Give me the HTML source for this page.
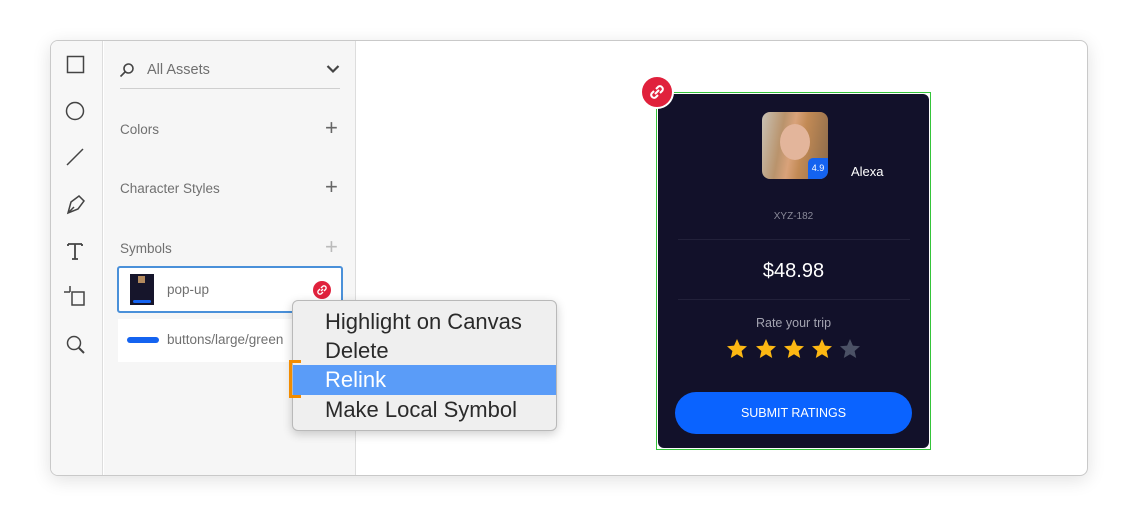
<!DOCTYPE html>
<html><head><style>
*{margin:0;padding:0;box-sizing:border-box}
body{width:1138px;height:517px;background:#fff;font-family:"Liberation Sans",sans-serif;position:relative;overflow:hidden}
.a{position:absolute}
.win{left:50px;top:40px;width:1038px;height:436px;border:1px solid #c9c9c9;border-radius:8px;overflow:hidden;box-shadow:0 4px 18px rgba(0,0,0,.12);background:#fff}
.tb{left:0;top:0;width:52px;height:100%;background:#f7f7f7;border-right:1px solid #ddd}
.pn{left:53px;top:0;width:252px;height:100%;background:#f6f6f6;border-right:1px solid #ddd}
.lbl{font-size:13.5px;color:#707070}
.plus{font-size:22px;color:#666;font-weight:300}
.menu{left:292px;top:300px;width:265px;height:131px;background:#efefef;border:1px solid #b9b9b9;border-radius:6px;box-shadow:0 3px 10px rgba(0,0,0,.2)}
.mi{position:absolute;left:32px;font-size:22px;color:#2a2a2a;white-space:nowrap}
.star{position:absolute;top:338px;width:22px;height:22px}
</style></head><body>
<div class="a win">
 <div class="a tb">
  <svg class="a" style="left:0;top:0" width="52" height="330" fill="none" stroke="#444" stroke-width="1.5">
   <rect x="16.5" y="15.5" width="16" height="16"/>
   <circle cx="24" cy="70" r="8.5"/>
   <line x1="16" y1="124" x2="32" y2="108"/>
   <path d="M17 172 L20 161 L28 155 L33 160 L27 168 Z M17 172 L23 166"/>
   <path d="M17 203 H31 M24 203 V218 M21 218 H27 M17 203 v2 M31 203 v2" stroke-width="1.8"/>
   <path d="M13 251 H19 M19 245 V251 M21 251 V264 H33 V251 Z"/>
   <circle cx="23" cy="302" r="6.5"/><line x1="28" y1="307" x2="33" y2="312" stroke-width="2"/>
  </svg>
 </div>
 <div class="a pn">
  <svg class="a" style="left:15px;top:21px" width="16" height="16" fill="none" stroke="#444" stroke-width="1.6"><circle cx="9.5" cy="6.5" r="4.5"/><line x1="6" y1="10" x2="1.5" y2="14.5"/></svg>
  <div class="a" style="left:43px;top:21px;font-size:14.5px;color:#707070">All Assets</div>
  <svg class="a" style="left:222px;top:23px" width="14" height="10" fill="none" stroke="#444" stroke-width="2.2"><path d="M1.5 2 L7 7.5 L12.5 2"/></svg>
  <div class="a" style="left:16px;top:47px;width:220px;height:1px;background:#cfcfcf"></div>
  <div class="a lbl" style="left:16px;top:81px">Colors</div><div class="a plus" style="left:221px;top:74px">+</div>
  <div class="a lbl" style="left:16px;top:140px">Character Styles</div><div class="a plus" style="left:221px;top:133px">+</div>
  <div class="a lbl" style="left:16px;top:200px">Symbols</div><div class="a plus" style="left:221px;top:193px;color:#bbb">+</div>
  <div class="a" style="left:13px;top:225px;width:226px;height:47px;background:#fff;border:2px solid #4a90d9;border-radius:3px"></div>
  <div class="a" style="left:26px;top:233px;width:24px;height:31px;background:#16152b"><div class="a" style="left:3px;top:26px;width:18px;height:3px;background:#1463f0;border-radius:2px"></div><div class="a" style="left:8px;top:2px;width:7px;height:7px;background:#b38a5e"></div></div>
  <div class="a lbl" style="left:63px;top:241px">pop-up</div>
  <div class="a" style="left:209px;top:240px;width:18px;height:18px;border-radius:50%;background:#e0213c"></div>
  <svg class="a" style="left:211px;top:242px" width="14" height="14" fill="none" stroke="#fff" stroke-width="1.4"><path d="M6 8 L8 6 M5 6 L3.5 7.5 a2 2 0 0 0 3 3 L8 9 M9 8 L10.5 6.5 a2 2 0 0 0 -3 -3 L6 5"/></svg>
  <div class="a" style="left:14px;top:278px;width:226px;height:43px;background:#fff"></div>
  <div class="a" style="left:23px;top:296px;width:32px;height:6px;background:#1463f0;border-radius:3px"></div>
  <div class="a lbl" style="left:63px;top:291px;white-space:nowrap">buttons/large/green</div>
 </div>
</div>
<!-- card -->
<div class="a" style="left:656px;top:92px;width:275px;height:358px;border:1.5px solid #35c53a"></div>
<div class="a" style="left:658px;top:94px;width:271px;height:354px;background:#12112a;border-radius:6px"></div>
<div class="a" style="left:762px;top:112px;width:66px;height:67px;border-radius:8px;overflow:hidden;background:linear-gradient(100deg,#c9c2b5 0%,#b9936c 30%,#d9a27a 45%,#c28a55 60%,#8a6a4a 100%)">
 <div class="a" style="left:18px;top:12px;width:30px;height:36px;border-radius:50%;background:#e3b59b"></div>
 <div class="a" style="left:46px;top:46px;width:20px;height:21px;background:#1463f0;border-top-left-radius:5px;color:#fff;font-size:9px;text-align:center;line-height:21px">4.9</div>
</div>
<div class="a" style="left:851px;top:164px;color:#fff;font-size:13px">Alexa</div>
<div class="a" style="left:658px;top:211px;width:271px;text-align:center;color:#8a8a99;font-size:10px">XYZ-182</div>
<div class="a" style="left:678px;top:239px;width:232px;height:1px;background:#22213a"></div>
<div class="a" style="left:658px;top:260px;width:271px;text-align:center;color:#fff;font-size:20px">$48.98</div>
<div class="a" style="left:678px;top:299px;width:232px;height:1px;background:#22213a"></div>
<div class="a" style="left:658px;top:316px;width:271px;text-align:center;color:#a3a3b0;font-size:12.5px">Rate your trip</div>
<svg width="0" height="0"><defs><path id="s" d="M11 1 L13.9 7.6 L21 8.3 L15.6 13 L17.2 20 L11 16.3 L4.8 20 L6.4 13 L1 8.3 L8.1 7.6 Z"/></defs></svg>
<svg class="star" style="left:726px"><use href="#s" fill="#fdb813"/></svg>
<svg class="star" style="left:755px"><use href="#s" fill="#fdb813"/></svg>
<svg class="star" style="left:783px"><use href="#s" fill="#fdb813"/></svg>
<svg class="star" style="left:811px"><use href="#s" fill="#fdb813"/></svg>
<svg class="star" style="left:839px"><use href="#s" fill="#4b5165"/></svg>
<div class="a" style="left:675px;top:392px;width:237px;height:42px;border-radius:21px;background:#0a63ff;color:#fff;font-size:12.5px;text-align:center;line-height:42px">SUBMIT RATINGS</div>
<div class="a" style="left:640px;top:75px;width:34px;height:34px;border-radius:50%;background:#e0213c;border:2px solid #fff"></div>
<svg class="a" style="left:647px;top:82px" width="20" height="20" fill="none" stroke="#fff" stroke-width="2"><path d="M8 12 L12 8 M7 9 L4.5 11.5 a3 3 0 0 0 4 4 L11 13 M13 11 L15.5 8.5 a3 3 0 0 0 -4 -4 L9 7"/></svg>
<!-- menu -->
<div class="a menu">
 <div class="mi" style="top:8px">Highlight on Canvas</div>
 <div class="mi" style="top:37px">Delete</div>
 <div class="a" style="left:0;top:64px;width:263px;height:30px;background:#5a9cf8"></div>
 <div class="mi" style="top:66px;color:#fff">Relink</div>
 <div class="mi" style="top:96px">Make Local Symbol</div>
</div>
<div class="a" style="left:289px;top:360px;width:12px;height:38px;border:3px solid #f28c00;border-right:none"></div>
</body></html>
